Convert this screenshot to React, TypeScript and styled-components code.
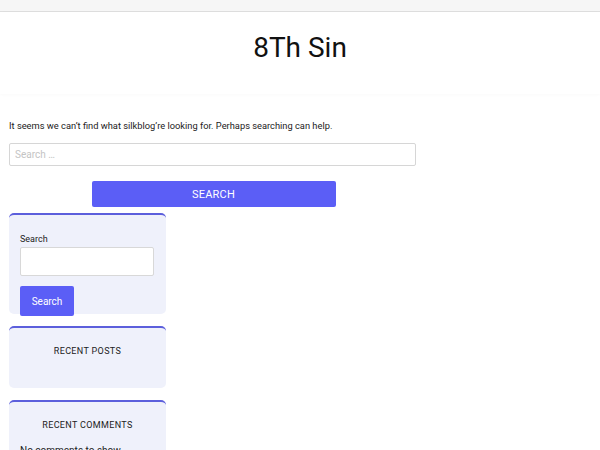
import React from "react";
import styled, { createGlobalStyle } from "styled-components";

const Global = createGlobalStyle`
  html, body { margin: 0; padding: 0; background: #fff; }
  body { font-family: Roboto, "Liberation Sans", sans-serif; color: #1a1a1a; overflow: hidden; }
  * { box-sizing: border-box; }
`;

const TopBar = styled.div`
  height: 12px;
  background: #f6f6f6;
  border-bottom: 1px solid #dedede;
`;

const Header = styled.header`
  height: 82px;
  display: flex;
  justify-content: center;
  padding-top: 19px;
  background: #fff;
  box-shadow: 0 1px 3px rgba(0, 0, 0, 0.025);
`;

const Title = styled.h1`
  margin: 0;
  font-size: 28px;
  font-weight: 400;
  line-height: 34px;
  color: #111;
`;

const Main = styled.main`
  padding: 26px 9px 0;
`;

const Notice = styled.p`
  margin: 0;
  font-size: 9.3px;
  line-height: 12px;
  color: #222;
`;

const SearchForm = styled.form`
  width: 407px;
  margin-top: 11px;
  display: flex;
  flex-direction: column;
  align-items: center;
`;

const WideInput = styled.input`
  width: 100%;
  height: 23px;
  border: 1px solid #d6d6d6;
  border-radius: 2px;
  padding: 0 5px;
  font-family: Roboto, "Liberation Sans", sans-serif;
  font-size: 10px;
  color: #333;
  &::placeholder { color: #c4c4c4; }
`;

const WideButton = styled.button`
  width: 244px;
  height: 26px;
  margin-top: 15px;
  margin-left: 2px;
  border: none;
  border-radius: 2px;
  background: #5b5ef6;
  color: #fff;
  font-family: Roboto, "Liberation Sans", sans-serif;
  font-size: 11px;
  letter-spacing: 0.2px;
`;

const Sidebar = styled.aside`
  width: 157px;
  margin-top: 6px;
  display: flex;
  flex-direction: column;
  gap: 12px;
`;

const Widget = styled.section<{ $h: number }>`
  height: ${(p) => p.$h}px;
  background: #eff1fb;
  border-top: 2px solid #5c5fdc;
  border-radius: 5px;
  padding: 0 11px;
`;

const Label = styled.div`
  margin-top: 19px;
  font-size: 9px;
  line-height: 11px;
  color: #222;
`;

const SmallInput = styled.input`
  display: block;
  width: 134px;
  height: 29px;
  margin-top: 2px;
  border: 1px solid #d8d8d8;
  border-radius: 2px;
  background: #fff;
`;

const SmallButton = styled.button`
  display: block;
  width: 54px;
  height: 30px;
  margin-top: 10px;
  border: none;
  border-radius: 2px;
  background: #5b5ef6;
  color: #fff;
  font-family: Roboto, "Liberation Sans", sans-serif;
  font-size: 10px;
`;

const WidgetTitle = styled.h2`
  margin: 18px 0 0;
  text-align: center;
  font-size: 9px;
  line-height: 11px;
  font-weight: 400;
  letter-spacing: 0.35px;
  color: #222;
`;

const WidgetText = styled.p`
  margin: 14px 0 0;
  font-size: 10px;
  color: #222;
`;

export default function App() {
  return (
    <>
      <Global />
      <TopBar />
      <Header>
        <Title>8Th Sin</Title>
      </Header>
      <Main>
        <Notice>It seems we can’t find what silkblog’re looking for. Perhaps searching can help.</Notice>
        <SearchForm onSubmit={(e) => e.preventDefault()}>
          <WideInput placeholder="Search …" />
          <WideButton type="submit">SEARCH</WideButton>
        </SearchForm>
        <Sidebar>
          <Widget $h={101}>
            <Label>Search</Label>
            <SmallInput />
            <SmallButton>Search</SmallButton>
          </Widget>
          <Widget $h={62}>
            <WidgetTitle>RECENT POSTS</WidgetTitle>
          </Widget>
          <Widget $h={80}>
            <WidgetTitle>RECENT COMMENTS</WidgetTitle>
            <WidgetText>No comments to show.</WidgetText>
          </Widget>
        </Sidebar>
      </Main>
    </>
  );
}
